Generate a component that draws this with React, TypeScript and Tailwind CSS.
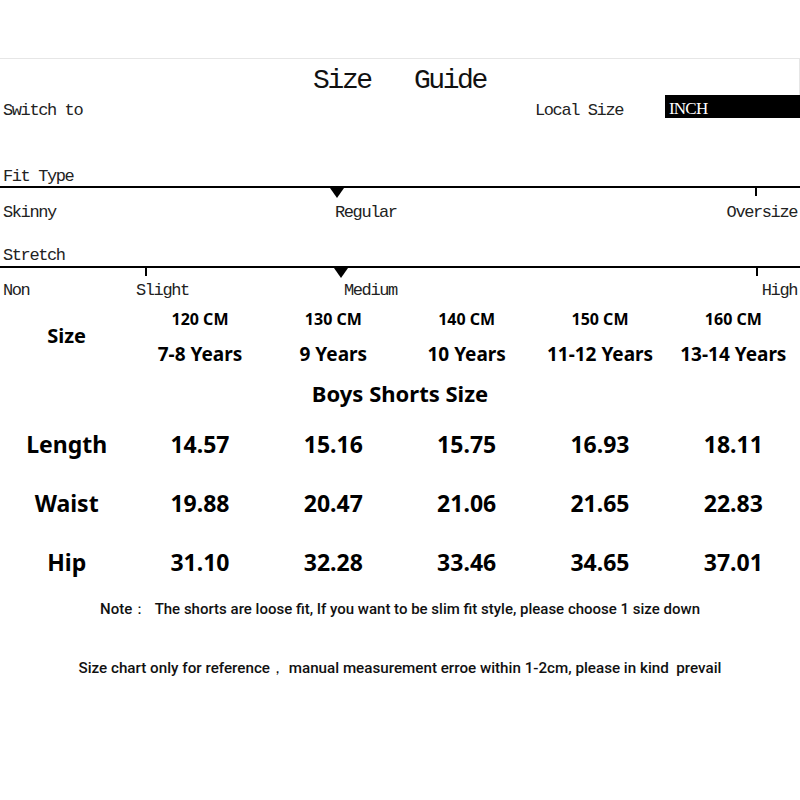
const mono = "font-['Liberation_Mono','DejaVu_Sans_Mono',monospace]";
const sans = "font-['Noto_Sans','Open_Sans',sans-serif]";

const cols = [
  { cm: '120 CM', age: '7-8 Years' },
  { cm: '130 CM', age: '9 Years' },
  { cm: '140 CM', age: '10 Years' },
  { cm: '150 CM', age: '11-12 Years' },
  { cm: '160 CM', age: '13-14 Years' },
];

const rows = [
  { name: 'Length', values: ['14.57', '15.16', '15.75', '16.93', '18.11'] },
  { name: 'Waist', values: ['19.88', '20.47', '21.06', '21.65', '22.83'] },
  { name: 'Hip', values: ['31.10', '32.28', '33.46', '34.65', '37.01'] },
];

function Arrow({ x }: { x: number }) {
  return (
    <svg className="absolute top-0" style={{ left: x - 7 }} width="14" height="10" viewBox="0 0 14 10">
      <polygon points="0,0 14,0 7,10" fill="#000" />
    </svg>
  );
}

function Tick({ x, h = 8 }: { x: number; h?: number }) {
  return <div className="absolute top-0 w-[2px] bg-black" style={{ left: x - 1, height: h }} />;
}

export default function App() {
  return (
    <div className="w-[800px] h-[800px] bg-white text-black overflow-hidden">
      <div className="h-[58px]" />

      {/* header */}
      <div className="h-[37px] border-t border-r border-[#e6e6e6] flex items-center justify-center pt-[8px]">
        <h1 className={`${mono} text-[28px] tracking-[-2.4px] leading-none text-[#111]`}>
          Size&nbsp;&nbsp;&nbsp;Guide
        </h1>
      </div>

      <div className={`${mono} h-[23px] flex items-center text-[17px] tracking-[-1.4px] text-[#222]`}>
        <span className="pl-[3px] w-[535px] pt-[8px]">Switch to</span>
        <span className="w-[130px] pt-[8px]">Local Size</span>
        <div className="flex-1 h-full bg-black flex items-center pl-[4px]">
          <span className="font-['Liberation_Serif',serif] text-white text-[17px] tracking-[-0.8px] pt-[4px]">INCH</span>
        </div>
      </div>

      {/* fit type */}
      <div className={`${mono} text-[17px] tracking-[-1.4px] text-[#222]`}>
        <div className="h-[46px]" />
        <div className="h-[22px] pl-[3px] pt-[2px] leading-[22px]">Fit Type</div>
        <div className="h-[2px] bg-black" />
        <div className="relative h-[56px]">
          <Arrow x={337} />
          <Tick x={756} />
          <div className="flex pt-[15px] leading-[20px]">
            <span className="w-[335px] pl-[3px]">Skinny</span>
            <span className="flex-1">Regular</span>
            <span className="pr-[3px]">Oversize</span>
          </div>
        </div>

        <div className="h-[22px] pl-[3px] pt-[1px] leading-[22px]">Stretch</div>
        <div className="h-[2px] bg-black" />
        <div className="relative h-[38px]">
          <Arrow x={341} />
          <Tick x={146} />
          <Tick x={757} />
          <div className="flex pt-[13px] leading-[20px]">
            <span className="w-[136px] pl-[3px]">Non</span>
            <span className="w-[208px]">Slight</span>
            <span className="flex-1">Medium</span>
            <span className="pr-[3px]">High</span>
          </div>
        </div>
      </div>

      {/* table */}
      <div className={`${sans} font-bold`}>
        <div className="grid grid-cols-6">
          <div className="row-span-2 flex items-center justify-center text-[20px] pb-[10px]">Size</div>
          {cols.map((c) => (
            <div key={c.cm} className="h-[26px] flex items-center justify-center text-[16px]">
              {c.cm}
            </div>
          ))}
          {cols.map((c) => (
            <div key={c.age} className="h-[44px] flex items-center justify-center text-[19px] whitespace-nowrap">
              {c.age}
            </div>
          ))}
        </div>

        <div className="h-[34px] flex items-center justify-center text-[22px]">Boys Shorts Size</div>

        <div className="pt-[5px]">
          {rows.map((r) => (
            <div key={r.name} className="grid grid-cols-6 h-[59px] items-center text-[23px]">
              <div className="text-center">{r.name}</div>
              {r.values.map((v, i) => (
                <div key={i} className="text-center">{v}</div>
              ))}
            </div>
          ))}
        </div>
      </div>

      <div className="font-['Roboto',sans-serif] font-medium text-[#111] text-center pt-[2px]">
        <p className="h-[30px] leading-[30px] text-[15px] whitespace-nowrap">
          Note：&nbsp;&nbsp;The shorts are loose fit, If you want to be slim fit style, please choose 1 size down
        </p>
        <div className="h-[29px]" />
        <p className="h-[30px] leading-[30px] text-[15.2px] whitespace-nowrap">
          Size chart only for reference，&nbsp;manual measurement erroe within 1-2cm, please in kind&nbsp;&nbsp;prevail
        </p>
      </div>
    </div>
  );
}
